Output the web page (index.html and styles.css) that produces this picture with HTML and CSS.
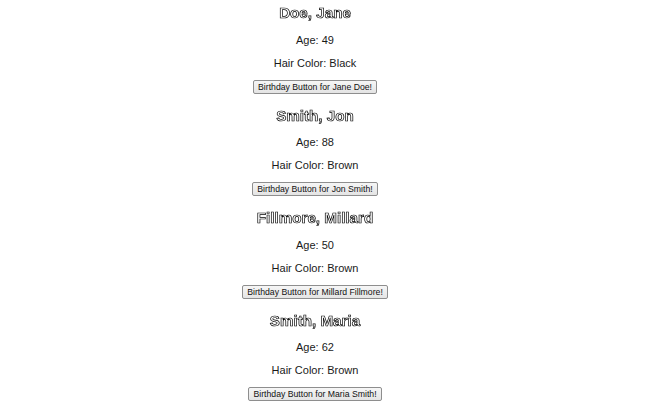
FILE: index.html
```html
<!DOCTYPE html>
<html>
<head>
<meta charset="utf-8">
<link rel="stylesheet" href="styles.css">
</head>
<body>
<div class="list">
  <div class="person">
    <h2 class="name">Doe, Jane</h2>
    <p class="line age">Age: 49</p>
    <p class="line">Hair Color: Black</p>
    <button class="bday">Birthday Button for Jane Doe!</button>
  </div>
  <div class="person">
    <h2 class="name">Smith, Jon</h2>
    <p class="line age">Age: 88</p>
    <p class="line">Hair Color: Brown</p>
    <button class="bday">Birthday Button for Jon Smith!</button>
  </div>
  <div class="person">
    <h2 class="name">Fillmore, Millard</h2>
    <p class="line age">Age: 50</p>
    <p class="line">Hair Color: Brown</p>
    <button class="bday">Birthday Button for Millard Fillmore!</button>
  </div>
  <div class="person">
    <h2 class="name">Smith, Maria</h2>
    <p class="line age">Age: 62</p>
    <p class="line">Hair Color: Brown</p>
    <button class="bday">Birthday Button for Maria Smith!</button>
  </div>
</div>
</body>
</html>
```

FILE: styles.css
```css
html, body {
  margin: 0;
  padding: 0;
  background: #fff;
}
body {
  font-family: "Liberation Sans", Arial, sans-serif;
  color: #1a1a1a;
}
.list {
  width: 630px;
  padding-top: 4px;
}
.person {
  display: flex;
  flex-direction: column;
  align-items: center;
  padding-bottom: 13px;
}
.name {
  margin: 0 0 2px;
  font-size: 15.2px;
  line-height: 17px;
  font-weight: bold;
  color: #fff;
  -webkit-text-stroke: 0.7px #000;
  transform: translateZ(0);
}
.line {
  margin: 10px 0 0;
  font-size: 11px;
  line-height: 13px;
}
.age {
  margin-top: 10.6px;
}
.bday {
  margin-top: 10px;
  height: 14px;
  padding: 0 4px;
  font-family: "Liberation Sans", Arial, sans-serif;
  font-size: 8.7px;
  line-height: 12px;
  color: #111;
  background: linear-gradient(#f6f6f6, #e4e4e4);
  border: 1px solid #8e8e8e;
  border-radius: 2px;
}
```
